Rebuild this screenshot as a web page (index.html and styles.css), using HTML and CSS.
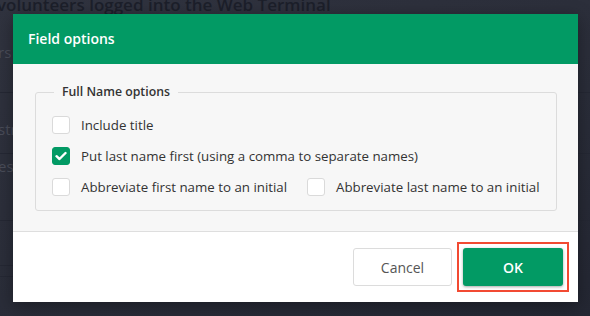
FILE: index.html
```html
<!DOCTYPE html>
<html>
<head>
<meta charset="utf-8">
<link rel="stylesheet" href="styles.css">
</head>
<body>
<div class="page">
  <div class="page-title">volunteers logged into the Web Terminal</div>
  <div class="page-row r1"><span>rs</span></div>
  <div class="page-row r2"><span>str</span></div>
  <div class="page-row r3"><span>ese</span></div>
  <div class="page-row r4"></div>
  <div class="page-row r5"></div>
</div>
<div class="dialog">
  <div class="dialog-header">Field options</div>
  <div class="dialog-body">
    <fieldset class="group">
      <legend class="group-title">Full Name options</legend>
      <div class="option-row">
        <label class="option"><span class="box"></span><span class="text">Include title</span></label>
      </div>
      <div class="option-row">
        <label class="option"><span class="box checked"><svg width="12" height="10" viewBox="0 0 12 10"><path d="M1.5 5.2 L4.5 8 L10.5 2" fill="none" stroke="#fff" stroke-width="2.4" stroke-linecap="round" stroke-linejoin="round"/></svg></span><span class="text">Put last name first (using a comma to separate names)</span></label>
      </div>
      <div class="option-row split">
        <label class="option"><span class="box"></span><span class="text">Abbreviate first name to an initial</span></label>
        <label class="option"><span class="box"></span><span class="text">Abbreviate last name to an initial</span></label>
      </div>
    </fieldset>
  </div>
  <div class="dialog-footer">
    <button class="btn btn-cancel">Cancel</button>
    <span class="highlight"><button class="btn btn-ok">OK</button></span>
  </div>
</div>
</body>
</html>
```
FILE: styles.css
```css
html, body {
  margin: 0;
  padding: 0;
}
body {
  width: 590px;
  height: 316px;
  overflow: hidden;
  background: linear-gradient(160deg, #30333f 0%, #2b2e3a 50%, #242733 100%);
  font-family: "Open Sans", "Noto Sans", sans-serif;
  position: relative;
}
.page {
  position: absolute;
  inset: 0;
}
.page-title {
  position: absolute;
  left: -3px;
  top: -7px;
  font-size: 17px;
  font-weight: 600;
  color: #1c1f2a;
  white-space: nowrap;
}
.page-row {
  position: absolute;
  left: 0;
  right: 0;
  border-bottom: 1px solid #252834;
  color: #4a4d59;
  font-size: 15px;
}
.page-row span { position: absolute; left: -2px; bottom: 0; }
.r1 { top: 30px; height: 62px; }
.r1 span { bottom: 30px; }
.r2 { top: 93px; height: 60px; }
.r2 span { bottom: 14px; }
.r3 { top: 154px; height: 66px; }
.r3 span { bottom: 44px; }
.r4 { top: 221px; height: 44px; }
.r5 { top: 266px; height: 10px; }

.dialog {
  position: absolute;
  left: 13px;
  top: 14px;
  width: 565px;
  height: 288px;
  display: flex;
  flex-direction: column;
  background: #fff;
  box-shadow: 0 4px 16px rgba(0,0,0,0.35);
}
.dialog-header {
  height: 50px;
  line-height: 50px;
  padding: 0 15px;
  background: #029a64;
  color: #fff;
  font-size: 14px;
  font-weight: 600;
}
.dialog-body {
  background: #f7f7f7;
  padding: 19px 23px 20px 22px;
  border-bottom: 1px solid #dedede;
}
.group {
  margin: 0;
  border: 1px solid #dcdcdc;
  border-radius: 3px;
  padding: 14px 16px 14px 16px;
  display: flex;
  flex-direction: column;
  gap: 12px;
}
.group-title {
  padding: 0 8px;
  margin-left: 2px;
  font-size: 12.3px;
  line-height: 18px;
  font-weight: 600;
  color: #333;
}
.option-row {
  display: flex;
  height: 19px;
  align-items: center;
}
.option-row.split .option:first-child {
  width: 255px;
}
.option {
  display: flex;
  align-items: center;
  gap: 11px;
  font-size: 13.3px;
  color: #333;
  white-space: nowrap;
}
.box {
  width: 18px;
  height: 18px;
  box-sizing: border-box;
  border: 1px solid #dadada;
  border-radius: 3px;
  background: #fff;
  display: flex;
  align-items: center;
  justify-content: center;
  flex: none;
}
.box.checked {
  background: #029a64;
  border-color: #029a64;
}
.dialog-footer {
  flex: 1;
  display: flex;
  justify-content: flex-end;
  align-items: flex-start;
  gap: 5px;
  padding: 10px 9px 0 0;
}
.btn {
  height: 38px;
  border-radius: 3px;
  font-family: "Open Sans", "Noto Sans", sans-serif;
  font-size: 14px;
  cursor: pointer;
}
.btn-cancel {
  width: 99px;
  margin-top: 6px;
  background: #fff;
  border: 1px solid #dcdcdc;
  color: #555;
}
.highlight {
  display: block;
  border: 2px solid #f24a32;
  padding: 4px;
}
.btn-ok {
  display: block;
  width: 100px;
  background: #029a64;
  border: none;
  color: #fff;
  font-weight: 600;
  box-shadow: 0 1px 3px rgba(0,0,0,0.35);
}
```
